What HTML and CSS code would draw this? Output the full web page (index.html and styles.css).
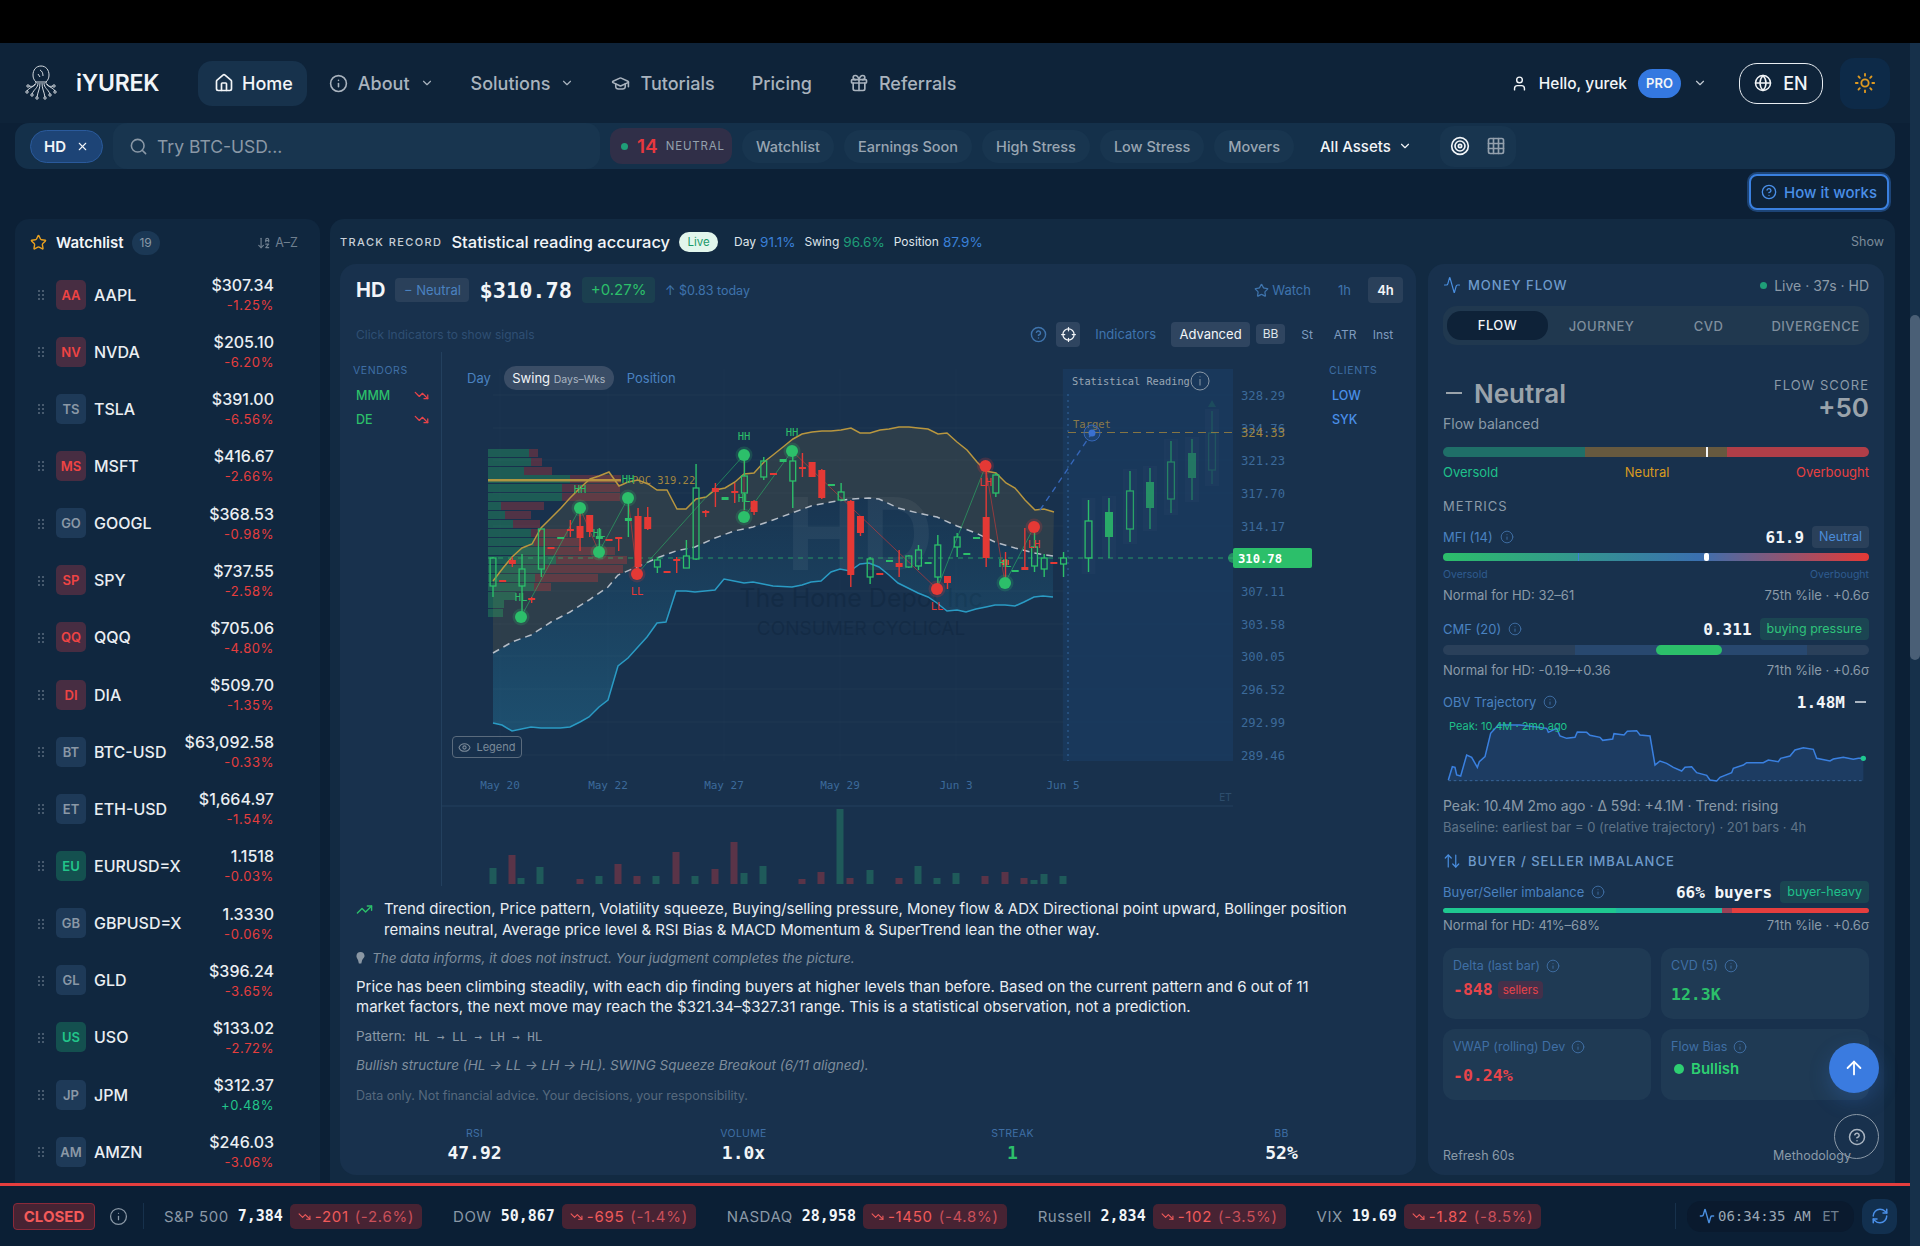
FILE: index.html
```html
<!DOCTYPE html>
<html lang="en">
<head>
    <meta charset="UTF-8">
    <title>iYUREK</title>
    <link rel="stylesheet" href="styles.css">
</head>
<body>
    <svg class="sprite" xmlns="http://www.w3.org/2000/svg">
        <symbol id="i-home" viewBox="0 0 24 24"><path d="M15 21v-8a1 1 0 0 0-1-1h-4a1 1 0 0 0-1 1v8"/><path d="M3 10a2 2 0 0 1 .709-1.528l7-5.999a2 2 0 0 1 2.582 0l7 5.999A2 2 0 0 1 21 10v9a2 2 0 0 1-2 2H5a2 2 0 0 1-2-2z"/></symbol>
        <symbol id="i-info" viewBox="0 0 24 24"><circle cx="12" cy="12" r="10"/><path d="M12 16v-4"/><path d="M12 8h.01"/></symbol>
        <symbol id="i-chev" viewBox="0 0 24 24"><path d="m6 9 6 6 6-6"/></symbol>
        <symbol id="i-cap" viewBox="0 0 24 24"><path d="M21.42 10.922a1 1 0 0 0-.019-1.838L12.83 5.18a2 2 0 0 0-1.66 0L2.6 9.08a1 1 0 0 0 0 1.832l8.57 3.908a2 2 0 0 0 1.66 0z"/><path d="M22 10v6"/><path d="M6 12.5V16a6 3 0 0 0 12 0v-3.5"/></symbol>
        <symbol id="i-gift" viewBox="0 0 24 24"><rect x="3" y="8" width="18" height="4" rx="1"/><path d="M12 8v13"/><path d="M19 12v7a2 2 0 0 1-2 2H7a2 2 0 0 1-2-2v-7"/><path d="M7.5 8a2.5 2.5 0 0 1 0-5A4.8 8 0 0 1 12 8a4.8 8 0 0 1 4.5-5 2.5 2.5 0 0 1 0 5"/></symbol>
        <symbol id="i-user" viewBox="0 0 24 24"><path d="M19 21v-2a4 4 0 0 0-4-4H9a4 4 0 0 0-4 4v2"/><circle cx="12" cy="7" r="4"/></symbol>
        <symbol id="i-globe" viewBox="0 0 24 24"><circle cx="12" cy="12" r="10"/><path d="M12 2a14.5 14.5 0 0 0 0 20 14.5 14.5 0 0 0 0-20"/><path d="M2 12h20"/></symbol>
        <symbol id="i-sun" viewBox="0 0 24 24"><circle cx="12" cy="12" r="4"/><path d="M12 2v2M12 20v2M4.93 4.93l1.41 1.41M17.66 17.66l1.41 1.41M2 12h2M20 12h2M6.34 17.66l-1.41 1.41M19.07 4.93l-1.41 1.41"/></symbol>
        <symbol id="i-search" viewBox="0 0 24 24"><path d="m21 21-4.34-4.34"/><circle cx="11" cy="11" r="8"/></symbol>
        <symbol id="i-x" viewBox="0 0 24 24"><path d="M18 6 6 18"/><path d="m6 6 12 12"/></symbol>
        <symbol id="i-target" viewBox="0 0 24 24"><circle cx="12" cy="12" r="10"/><circle cx="12" cy="12" r="6"/><circle cx="12" cy="12" r="2"/></symbol>
        <symbol id="i-grid" viewBox="0 0 24 24"><rect x="3" y="3" width="18" height="18" rx="2"/><path d="M3 9h18M3 15h18M9 3v18M15 3v18"/></symbol>
        <symbol id="i-help" viewBox="0 0 24 24"><circle cx="12" cy="12" r="10"/><path d="M9.09 9a3 3 0 0 1 5.83 1c0 2-3 3-3 3"/><path d="M12 17h.01"/></symbol>
        <symbol id="i-star" viewBox="0 0 24 24"><path d="M11.525 2.295a.53.53 0 0 1 .95 0l2.31 4.679a2.123 2.123 0 0 0 1.595 1.16l5.166.756a.53.53 0 0 1 .294.904l-3.736 3.638a2.123 2.123 0 0 0-.611 1.878l.882 5.14a.53.53 0 0 1-.771.56l-4.618-2.428a2.122 2.122 0 0 0-1.973 0L6.396 21.01a.53.53 0 0 1-.77-.56l.881-5.139a2.122 2.122 0 0 0-.611-1.879L2.16 9.795a.53.53 0 0 1 .294-.906l5.165-.755a2.122 2.122 0 0 0 1.597-1.16z"/></symbol>
        <symbol id="i-pulse" viewBox="0 0 24 24"><path d="M22 12h-2.48a2 2 0 0 0-1.93 1.46l-2.35 8.36a.25.25 0 0 1-.48 0L9.24 2.18a.25.25 0 0 0-.48 0l-2.35 8.36A2 2 0 0 1 4.49 12H2"/></symbol>
        <symbol id="i-updown" viewBox="0 0 24 24"><path d="m21 16-4 4-4-4"/><path d="M17 20V4"/><path d="m3 8 4-4 4 4"/><path d="M7 4v16"/></symbol>
        <symbol id="i-up" viewBox="0 0 24 24"><path d="m5 12 7-7 7 7"/><path d="M12 19V5"/></symbol>
        <symbol id="i-sort" viewBox="0 0 24 24"><path d="m3 16 4 4 4-4"/><path d="M7 20V4"/><path d="M20 8h-5"/><path d="M15 10V6.5a2.5 2.5 0 0 1 5 0V10"/><path d="M15 14h5l-5 6h5"/></symbol>
        <symbol id="i-rise" viewBox="0 0 24 24"><path d="M16 7h6v6"/><path d="m22 7-8.5 8.5-5-5L2 17"/></symbol>
        <symbol id="i-fall" viewBox="0 0 24 24"><path d="M16 17h6v-6"/><path d="m22 17-8.5-8.5-5 5L2 7"/></symbol>
        <symbol id="i-refresh" viewBox="0 0 24 24"><path d="M3 12a9 9 0 0 1 9-9 9.75 9.75 0 0 1 6.74 2.74L21 8"/><path d="M21 3v5h-5"/><path d="M21 12a9 9 0 0 1-9 9 9.75 9.75 0 0 1-6.74-2.74L3 16"/><path d="M8 16H3v5"/></symbol>
        <symbol id="i-eye" viewBox="0 0 24 24"><path d="M2.062 12.348a1 1 0 0 1 0-.696 10.75 10.75 0 0 1 19.876 0 1 1 0 0 1 0 .696 10.75 10.75 0 0 1-19.876 0"/><circle cx="12" cy="12" r="3"/></symbol>
        <symbol id="i-cross" viewBox="0 0 24 24"><circle cx="12" cy="12" r="9"/><path d="M12 1v5M12 18v5M1 12h5M18 12h5"/></symbol>
    </svg>

    <div class="topbar"></div>

    <div class="shell">
        <div class="page">

            <header class="nav">
                <svg class="logo" viewBox="0 0 34 36">
                    <path d="M17 1c-5 0-8 4-8 9 0 3 1 5 3 7h10c2-2 3-4 3-7 0-5-3-9-8-9z"/>
                    <path d="M16 5c2 1 3 3 3 6M14 9l2 3"/>
                    <path d="M12 17c0 4-4 5-7 4M11 19c-2 4-6 3-8 7M14 18c0 5-4 6-6 11M16 18c0 6-2 8-3 14M18 18c0 6 2 8 3 14M20 18c0 5 4 6 6 11M23 19c2 4 6 3 8 7M22 17c0 4 4 5 7 4"/>
                    <circle cx="4" cy="21" r="1.2"/><circle cx="30" cy="21" r="1.2"/><circle cx="3" cy="27" r="1.2"/><circle cx="31" cy="27" r="1.2"/><circle cx="8" cy="30" r="1.2"/><circle cx="26" cy="30" r="1.2"/><circle cx="13" cy="33" r="1.2"/><circle cx="21" cy="33" r="1.2"/>
                </svg>
                <span class="brand">iYUREK</span>
                <a class="nav-item active"><svg class="ic ic-20"><use href="#i-home"/></svg>Home</a>
                <a class="nav-item nav-about"><svg class="ic ic-19"><use href="#i-info"/></svg>About<svg class="ic ic-14"><use href="#i-chev"/></svg></a>
                <a class="nav-item nav-wide">Solutions<svg class="ic ic-14"><use href="#i-chev"/></svg></a>
                <a class="nav-item nav-wide"><svg class="ic ic-19"><use href="#i-cap"/></svg>Tutorials</a>
                <a class="nav-item nav-wide">Pricing</a>
                <a class="nav-item nav-wide"><svg class="ic ic-20"><use href="#i-gift"/></svg>Referrals</a>
                <div class="nav-right">
                    <svg class="ic ic-17 white"><use href="#i-user"/></svg>
                    <span class="hello">Hello, yurek</span>
                    <span class="pro">PRO</span>
                    <svg class="ic ic-14 chev-user"><use href="#i-chev"/></svg>
                    <button class="lang"><svg class="ic ic-18"><use href="#i-globe"/></svg>EN</button>
                    <div class="theme"><svg class="ic ic-22"><use href="#i-sun"/></svg></div>
                </div>
            </header>

            <div class="searchbar">
                <span class="hd-chip">HD<svg class="ic ic-13"><use href="#i-x"/></svg></span>
                <div class="search"><svg class="ic ic-19"><use href="#i-search"/></svg>Try BTC-USD...</div>
                <span class="stress"><i class="dot"></i><b>14</b><em>NEUTRAL</em></span>
                <span class="pill">Watchlist</span>
                <span class="pill">Earnings Soon</span>
                <span class="pill">High Stress</span>
                <span class="pill">Low Stress</span>
                <span class="pill">Movers</span>
                <span class="assets">All Assets<svg class="ic ic-14"><use href="#i-chev"/></svg></span>
                <div class="view-toggle">
                    <svg class="ic ic-20 white"><use href="#i-target"/></svg>
                    <svg class="ic ic-20"><use href="#i-grid"/></svg>
                </div>
            </div>

            <div class="how-row">
                <button class="how"><svg class="ic ic-16"><use href="#i-help"/></svg>How it works</button>
            </div>

            <div class="content">

                <aside class="watchlist">
                    <div class="wl-head">
                        <svg class="ic ic-17 gold"><use href="#i-star"/></svg>
                        <strong>Watchlist</strong>
                        <span class="count">19</span>
                        <span class="sort"><svg class="ic ic-14"><use href="#i-sort"/></svg>A–Z</span>
                    </div>
                    <div class="wl-row"><i class="grip"></i><span class="badge bad">AA</span><span class="sym">AAPL</span><span class="quote"><b>$307.34</b><em>-1.25%</em></span></div>
                    <div class="wl-row"><i class="grip"></i><span class="badge bad">NV</span><span class="sym">NVDA</span><span class="quote"><b>$205.10</b><em>-6.20%</em></span></div>
                    <div class="wl-row"><i class="grip"></i><span class="badge">TS</span><span class="sym">TSLA</span><span class="quote"><b>$391.00</b><em>-6.56%</em></span></div>
                    <div class="wl-row"><i class="grip"></i><span class="badge bad">MS</span><span class="sym">MSFT</span><span class="quote"><b>$416.67</b><em>-2.66%</em></span></div>
                    <div class="wl-row"><i class="grip"></i><span class="badge">GO</span><span class="sym">GOOGL</span><span class="quote"><b>$368.53</b><em>-0.98%</em></span></div>
                    <div class="wl-row"><i class="grip"></i><span class="badge bad">SP</span><span class="sym">SPY</span><span class="quote"><b>$737.55</b><em>-2.58%</em></span></div>
                    <div class="wl-row"><i class="grip"></i><span class="badge bad">QQ</span><span class="sym">QQQ</span><span class="quote"><b>$705.06</b><em>-4.80%</em></span></div>
                    <div class="wl-row"><i class="grip"></i><span class="badge bad">DI</span><span class="sym">DIA</span><span class="quote"><b>$509.70</b><em>-1.35%</em></span></div>
                    <div class="wl-row"><i class="grip"></i><span class="badge">BT</span><span class="sym">BTC-USD</span><span class="quote"><b>$63,092.58</b><em>-0.33%</em></span></div>
                    <div class="wl-row"><i class="grip"></i><span class="badge">ET</span><span class="sym">ETH-USD</span><span class="quote"><b>$1,664.97</b><em>-1.54%</em></span></div>
                    <div class="wl-row"><i class="grip"></i><span class="badge good">EU</span><span class="sym">EURUSD=X</span><span class="quote"><b>1.1518</b><em>-0.03%</em></span></div>
                    <div class="wl-row"><i class="grip"></i><span class="badge">GB</span><span class="sym">GBPUSD=X</span><span class="quote"><b>1.3330</b><em>-0.06%</em></span></div>
                    <div class="wl-row"><i class="grip"></i><span class="badge">GL</span><span class="sym">GLD</span><span class="quote"><b>$396.24</b><em>-3.65%</em></span></div>
                    <div class="wl-row"><i class="grip"></i><span class="badge good">US</span><span class="sym">USO</span><span class="quote"><b>$133.02</b><em>-2.72%</em></span></div>
                    <div class="wl-row"><i class="grip"></i><span class="badge">JP</span><span class="sym">JPM</span><span class="quote"><b>$312.37</b><em class="up">+0.48%</em></span></div>
                    <div class="wl-row"><i class="grip"></i><span class="badge">AM</span><span class="sym">AMZN</span><span class="quote"><b>$246.03</b><em>-3.06%</em></span></div>
                </aside>

                <main class="main">
                    <div class="track">
                        <span class="track-tag">TRACK RECORD</span>
                        <span class="track-title">Statistical reading accuracy</span>
                        <span class="live">Live</span>
                        <span class="acc">Day <b class="blue">91.1%</b></span>
                        <span class="acc">Swing <b class="teal">96.6%</b></span>
                        <span class="acc">Position <b class="blue">87.9%</b></span>
                        <span class="show">Show</span>
                    </div>

                    <div class="columns">
                        <section class="chart-card">
                            <div class="quote-row">
                                <span class="ticker">HD</span>
                                <span class="state">− Neutral</span>
                                <span class="last">$310.78</span>
                                <span class="delta">+0.27%</span>
                                <span class="today">↑ $0.83 today</span>
                                <span class="watch"><svg class="ic ic-15"><use href="#i-star"/></svg>Watch</span>
                                <span class="tf">1h</span>
                                <span class="tf on">4h</span>
                            </div>
                            <div class="tool-row">
                                <span class="hint">Click Indicators to show signals</span>
                                <svg class="ic ic-17 tool-help"><use href="#i-help"/></svg>
                                <span class="tool-box"><svg class="ic ic-15 white"><use href="#i-cross"/></svg></span>
                                <span class="tool-link">Indicators</span>
                                <span class="tool-on">Advanced</span>
                                <span class="tool-small on">BB</span>
                                <span class="tool-small">St</span>
                                <span class="tool-small">ATR</span>
                                <span class="tool-small">Inst</span>
                            </div>

                            <div class="chart-body">
                                <div class="side vendors">
                                    <h5>VENDORS</h5>
                                    <p><span>MMM</span><svg class="ic ic-15 red"><use href="#i-fall"/></svg></p>
                                    <p><span>DE</span><svg class="ic ic-15 red"><use href="#i-fall"/></svg></p>
                                </div>
                                <div class="plot">
                                    <svg id="chart" class="chart" viewBox="442 352 875 534"></svg>
                                    <div class="horizon">
                                        <span>Day</span>
                                        <span class="on">Swing <small>Days–Wks</small></span>
                                        <span>Position</span>
                                    </div>
                                    <div class="legend-btn"><svg class="ic ic-13"><use href="#i-eye"/></svg>Legend</div>
                                </div>
                                <div class="side clients">
                                    <h5>CLIENTS</h5>
                                    <p>LOW</p>
                                    <p>SYK</p>
                                </div>
                            </div>

                            <div class="reading">
                                <p class="lead"><svg class="ic ic-17 green"><use href="#i-rise"/></svg><span>Trend direction, Price pattern, Volatility squeeze, Buying/selling pressure, Money flow &amp; ADX Directional point upward, Bollinger position remains neutral, Average price level &amp; RSI Bias &amp; MACD Momentum &amp; SuperTrend lean the other way.</span></p>
                                <p class="note"><svg class="bulb" viewBox="0 0 10 16"><path d="M5 0C2 0 0 2 0 5c0 2 1 3 2 5l1 4h3l1-4c1-2 3-3 3-5 0-3-2-5-5-5z"/></svg>The data informs, it does not instruct. Your judgment completes the picture.</p>
                                <p class="body-text">Price has been climbing steadily, with each dip finding buyers at higher levels than before. Based on the current pattern and 6 out of 11 market factors, the next move may reach the $321.34–$327.31 range. This is a statistical observation, not a prediction.</p>
                                <p class="pattern">Pattern: <code>HL → LL → LH → HL</code></p>
                                <p class="note plain">Bullish structure (HL → LL → LH → HL). SWING Squeeze Breakout (6/11 aligned).</p>
                                <p class="legal">Data only. Not financial advice. Your decisions, your responsibility.</p>
                            </div>

                            <div class="stats">
                                <div><label>RSI</label><b>47.92</b></div>
                                <div><label>VOLUME</label><b>1.0x</b></div>
                                <div><label>STREAK</label><b class="green">1</b></div>
                                <div><label>BB</label><b>52%</b></div>
                            </div>
                        </section>

                        <section class="flow-card">
                            <div class="flow-head">
                                <span class="sec-title"><svg class="ic ic-18"><use href="#i-pulse"/></svg>MONEY FLOW</span>
                                <span class="flow-live"><i class="dot"></i>Live · 37s · HD</span>
                            </div>
                            <div class="flow-tabs">
                                <span class="on">FLOW</span><span>JOURNEY</span><span>CVD</span><span>DIVERGENCE</span>
                            </div>

                            <div class="flow-sum">
                                <div>
                                    <div class="verdict"><i></i>Neutral</div>
                                    <div class="verdict-sub">Flow balanced</div>
                                </div>
                                <div class="score"><label>FLOW SCORE</label><b>+50</b></div>
                            </div>
                            <div class="zone-bar"><i class="zone-a"></i><i class="zone-b"></i><i class="zone-c"></i><u></u></div>
                            <div class="zone-labels"><span class="z-green">Oversold</span><span class="z-gold">Neutral</span><span class="z-red">Overbought</span></div>

                            <h6 class="metrics">METRICS</h6>

                            <div class="metric-row">
                                <span class="m-name">MFI (14)<svg class="ic ic-14"><use href="#i-info"/></svg></span>
                                <span class="m-val">61.9</span>
                                <span class="tag tag-blue">Neutral</span>
                            </div>
                            <div class="mfi-bar"><i class="tick"></i><u></u></div>
                            <div class="scale"><span>Oversold</span><span>Overbought</span></div>
                            <div class="normal"><span>Normal for HD: 32–61</span><span>75th %ile · +0.6σ</span></div>

                            <div class="metric-row cmf">
                                <span class="m-name">CMF (20)<svg class="ic ic-14"><use href="#i-info"/></svg></span>
                                <span class="m-val green">0.311</span>
                                <span class="tag tag-green">buying pressure</span>
                            </div>
                            <div class="cmf-bar"><i class="range"></i><i class="fill"></i></div>
                            <div class="normal n-cmf"><span>Normal for HD: -0.19–+0.36</span><span>71th %ile · +0.6σ</span></div>

                            <div class="metric-row obv">
                                <span class="m-name">OBV Trajectory<svg class="ic ic-14"><use href="#i-info"/></svg></span>
                                <span class="m-val">1.48M</span>
                                <i class="obv-dash"></i>
                            </div>
                            <svg id="obv" class="obv-chart" viewBox="69 168 1278 204"></svg>
                            <p class="obv-text">Peak: 10.4M 2mo ago · Δ 59d: +4.1M · Trend: rising</p>
                            <p class="obv-base">Baseline: earliest bar = 0 (relative trajectory) · 201 bars · 4h</p>

                            <div class="sec-title buyers"><svg class="ic ic-18"><use href="#i-updown"/></svg>BUYER / SELLER IMBALANCE</div>
                            <div class="metric-row bs">
                                <span class="m-name">Buyer/Seller imbalance<svg class="ic ic-14"><use href="#i-info"/></svg></span>
                                <span class="m-val">66% buyers</span>
                                <span class="tag tag-teal">buyer-heavy</span>
                            </div>
                            <div class="bs-bar"><i class="b1"></i><i class="b2"></i><i class="b3"></i><i class="b4"></i></div>
                            <div class="normal n-bs"><span>Normal for HD: 41%–68%</span><span>71th %ile · +0.6σ</span></div>

                            <div class="tiles">
                                <div class="tile">
                                    <label>Delta (last bar)<svg class="ic ic-14"><use href="#i-info"/></svg></label>
                                    <div class="tile-val"><b class="red">-848</b><span class="tag tag-red">sellers</span></div>
                                </div>
                                <div class="tile">
                                    <label>CVD (5)<svg class="ic ic-14"><use href="#i-info"/></svg></label>
                                    <div class="tile-val low"><b class="green">12.3K</b></div>
                                </div>
                                <div class="tile">
                                    <label>VWAP (rolling) Dev<svg class="ic ic-14"><use href="#i-info"/></svg></label>
                                    <div class="tile-val low"><b class="red">-0.24%</b></div>
                                </div>
                                <div class="tile">
                                    <label>Flow Bias<svg class="ic ic-14"><use href="#i-info"/></svg></label>
                                    <div class="bias"><i></i>Bullish</div>
                                </div>
                            </div>

                            <div class="flow-foot"><span>Refresh 60s</span><span>Methodology</span></div>
                        </section>
                    </div>
                </main>
            </div>

            <footer class="ticker-bar">
                <span class="closed">CLOSED</span>
                <svg class="ic ic-19 info-foot"><use href="#i-info"/></svg>
                <i class="foot-sep"></i>
                <div class="tick-item"><span>S&amp;P 500</span><b>7,384</b><em><svg class="ic ic-13"><use href="#i-fall"/></svg>-201<small>(-2.6%)</small></em></div>
                <div class="tick-item"><span>DOW</span><b>50,867</b><em><svg class="ic ic-13"><use href="#i-fall"/></svg>-695<small>(-1.4%)</small></em></div>
                <div class="tick-item"><span>NASDAQ</span><b>28,958</b><em><svg class="ic ic-13"><use href="#i-fall"/></svg>-1450<small>(-4.8%)</small></em></div>
                <div class="tick-item"><span>Russell</span><b>2,834</b><em><svg class="ic ic-13"><use href="#i-fall"/></svg>-102<small>(-3.5%)</small></em></div>
                <div class="tick-item"><span>VIX</span><b>19.69</b><em><svg class="ic ic-13"><use href="#i-fall"/></svg>-1.82<small>(-8.5%)</small></em></div>
                <i class="foot-sep right"></i>
                <div class="clock"><svg class="ic ic-16"><use href="#i-pulse"/></svg>06:34:35 AM <span>ET</span></div>
                <div class="sync"><svg class="ic ic-18"><use href="#i-refresh"/></svg></div>
            </footer>

            <button class="fab"><svg class="ic ic-22"><use href="#i-up"/></svg></button>
            <button class="fab-help"><svg class="ic ic-18"><use href="#i-help"/></svg></button>
        </div>

        <div class="scrollbar"><i></i></div>
    </div>

    <script src="chart.js"></script>
</body>
</html>
```

FILE: styles.css
```css
*{
    margin: 0;
    padding: 0;
    box-sizing: border-box;
}
html,body{
    height: 100%;
    overflow: hidden;
}
body{
    background: #0c2036;
    color: #e8edf2;
    font-family: Inter, "Liberation Sans", sans-serif;
}
button{
    font-family: inherit;
    background: none;
    border: none;
}
em{
    font-style: normal;
}
.sprite{
    display: none;
}
.ic{
    fill: none;
    stroke: currentColor;
    stroke-width: 2;
    stroke-linecap: round;
    stroke-linejoin: round;
    flex: none;
}
.ic-13{ width: 13px; height: 13px; }
.ic-14{ width: 14px; height: 14px; }
.ic-15{ width: 15px; height: 15px; }
.ic-16{ width: 16px; height: 16px; }
.ic-17{ width: 17px; height: 17px; }
.ic-18{ width: 18px; height: 18px; }
.ic-19{ width: 19px; height: 19px; }
.ic-20{ width: 20px; height: 20px; }
.ic-22{ width: 22px; height: 22px; }
.white{ color: #f2f5f8; }
.gold{ color: #e8a020; }
.green{ color: #2cbf6a; }
.red{ color: #e8444a; }
.blue{ color: #3a80d8; }
.teal{ color: #1f9e78; }

.topbar{
    height: 43px;
    background: #000;
}
.shell{
    display: flex;
    height: 1203px;
}
.page{
    position: relative;
    width: 1910px;
    display: flex;
    flex-direction: column;
}
.scrollbar{
    width: 10px;
    background: #16304a;
    padding-top: 272px;
}
.scrollbar i{
    display: block;
    height: 345px;
    background: #4a5f76;
    border-radius: 5px;
}

/* nav */
.nav{
    height: 80px;
    display: flex;
    align-items: center;
    padding: 0 20px 0 24px;
    background: #0e2339;
    flex: none;
}
.logo{
    width: 34px;
    height: 36px;
    fill: none;
    stroke: #d4dae0;
    stroke-width: 1;
}
.brand{
    margin: 0 41px 0 18px;
    font-size: 23px;
    font-weight: 600;
    letter-spacing: -0.2px;
    color: #f2f5f8;
    width: 81px;
}
.nav-item{
    display: flex;
    align-items: center;
    gap: 10px;
    font-size: 18px;
    font-weight: 500;
    color: #a9b3be;
}
.nav-item.active{
    height: 45px;
    padding: 0 14px 0 16px;
    gap: 8px;
    background: #17324c;
    border-radius: 14px;
    color: #f2f5f8;
}
.nav-about{
    margin-left: 22px;
}
.nav-wide{
    margin-left: 37px;
}
.nav-right{
    margin-left: auto;
    display: flex;
    align-items: center;
}
.hello{
    margin-left: 11px;
    font-size: 15.5px;
    font-weight: 500;
    color: #f2f5f8;
}
.pro{
    margin-left: 11px;
    width: 43px;
    height: 29px;
    line-height: 29px;
    text-align: center;
    background: #3478e0;
    border-radius: 15px;
    font-size: 13px;
    font-weight: 600;
    color: #f2f5f8;
}
.chev-user{
    margin-left: 12px;
    color: #c2cad2;
}
.lang{
    margin-left: 32px;
    width: 84px;
    height: 41px;
    display: flex;
    align-items: center;
    justify-content: center;
    gap: 11px;
    border: 1.5px solid #e8edf2;
    border-radius: 18px;
    color: #f2f5f8;
    font-size: 18px;
    font-weight: 500;
}
.theme{
    margin-left: 17px;
    width: 50px;
    height: 51px;
    display: flex;
    align-items: center;
    justify-content: center;
    background: #0d2a48;
    border-radius: 14px;
    color: #e09a20;
}

/* search row */
.searchbar{
    height: 46px;
    margin: 0 15px;
    flex: none;
    display: flex;
    align-items: center;
    background: #14304a;
    border-radius: 14px;
    padding-left: 15px;
    font-size: 15px;
}
.hd-chip{
    width: 73px;
    height: 33px;
    display: flex;
    align-items: center;
    justify-content: center;
    gap: 10px;
    background: #1d4476;
    border: 1px solid #2a5a9c;
    border-radius: 17px;
    font-size: 15px;
    font-weight: 600;
    color: #f2f5f8;
}
.search{
    margin-left: 10px;
    width: 487px;
    height: 46px;
    display: flex;
    align-items: center;
    gap: 9px;
    padding-left: 16px;
    background: #18354f;
    border-radius: 14px;
    font-size: 17.5px;
    color: #8a98a6;
}
.stress{
    margin-left: 10px;
    width: 122px;
    height: 36px;
    display: flex;
    align-items: center;
    padding-left: 11px;
    background: #302f48;
    border-radius: 12px;
}
.dot{
    display: inline-block;
    width: 7px;
    height: 7px;
    background: #1f9e78;
    border-radius: 50%;
}
.stress b{
    margin-left: 9px;
    font-size: 19px;
    font-weight: 600;
    color: #e8383e;
}
.stress em{
    margin-left: 8px;
    font-size: 11.5px;
    letter-spacing: 0.8px;
    color: #93a0ad;
}
.pill{
    margin-left: 10px;
    height: 33px;
    line-height: 33px;
    padding: 0 14px;
    background: #18354f;
    border-radius: 17px;
    font-weight: 500;
    font-size: 14.5px;
    color: #98a5b2;
}
.assets{
    margin-left: 26px;
    display: flex;
    align-items: center;
    gap: 7px;
    font-size: 15px;
    font-weight: 500;
    color: #f2f5f8;
}
.view-toggle{
    margin-left: 28px;
    width: 76px;
    height: 41px;
    display: flex;
    align-items: center;
    justify-content: center;
    gap: 16px;
    background: #18354f;
    border-radius: 14px;
    color: #93a0ad;
}

.how-row{
    height: 50px;
    flex: none;
    display: flex;
    justify-content: flex-end;
    align-items: flex-start;
    padding: 5px 21px 0 0;
}
.how{
    width: 140px;
    height: 36px;
    display: flex;
    align-items: center;
    justify-content: center;
    gap: 7px;
    background: #0e2339;
    border: 2px solid #3a80e0;
    box-shadow: 0 0 0 2px #1d4476;
    border-radius: 8px;
    color: #4a8fe8;
    font-size: 15px;
    font-weight: 500;
}

/* columns */
.content{
    flex: 1;
    min-height: 0;
    display: flex;
    gap: 10px;
    padding: 0 15px;
    overflow: hidden;
}

/* watchlist */
.watchlist{
    width: 305px;
    flex: none;
    background: #10273f;
    border-radius: 14px 14px 0 0;
    overflow: hidden;
}
.wl-head{
    height: 47px;
    display: flex;
    align-items: center;
    padding: 0 22px 0 15px;
}
.wl-head strong{
    margin-left: 9px;
    font-size: 15px;
    font-weight: 600;
    color: #f2f5f8;
}
.count{
    margin-left: 8px;
    width: 28px;
    height: 24px;
    line-height: 24px;
    text-align: center;
    background: #1b3855;
    border-radius: 12px;
    font-size: 12px;
    color: #8a98a6;
}
.sort{
    margin-left: auto;
    display: flex;
    align-items: center;
    gap: 4px;
    font-size: 12.5px;
    color: #6f7f8f;
}
.wl-row{
    height: 57.15px;
    display: flex;
    align-items: center;
    padding-left: 22px;
}
.grip{
    width: 8px;
    height: 11px;
    background-image: radial-gradient(circle, #475a6e 1px, transparent 1.2px);
    background-size: 4px 4px;
}
.badge{
    margin-left: 11px;
    width: 30px;
    height: 30px;
    line-height: 30px;
    text-align: center;
    background: #1e3a58;
    border-radius: 5px;
    font-size: 13px;
    font-weight: 600;
    color: #8a98a6;
}
.badge.bad{
    background: #472d42;
    color: #ef4444;
}
.badge.good{
    background: #14504f;
    color: #22c58a;
}
.sym{
    margin-left: 8px;
    font-size: 16px;
    font-weight: 500;
    color: #eaeef2;
}
.quote{
    margin-left: auto;
    margin-right: 46px;
    display: flex;
    flex-direction: column;
    align-items: flex-end;
}
.quote b{
    font-size: 16px;
    font-weight: 500;
    line-height: 20px;
    color: #eaeef2;
}
.quote em{
    margin-top: 1px;
    font-size: 13px;
    line-height: 18px;
    letter-spacing: 0.6px;
    color: #e53e3e;
}
.quote em.up{
    color: #22c58a;
}

/* main panel */
.main{
    flex: 1;
    min-width: 0;
    background: #122a42;
    border-radius: 14px 14px 0 0;
    padding: 0 11px 8px 10px;
    display: flex;
    flex-direction: column;
}
.track{
    height: 45px;
    flex: none;
    display: flex;
    align-items: center;
}
.track-tag{
    font-size: 11px;
    letter-spacing: 1.4px;
    color: #c8d0d8;
    font-weight: 500;
}
.track-title{
    margin-left: 9px;
    font-size: 16.5px;
    font-weight: 500;
    color: #f2f5f8;
}
.live{
    margin-left: 9px;
    width: 39px;
    height: 20px;
    line-height: 20px;
    text-align: center;
    background: #e2f6ec;
    border-radius: 10px;
    font-size: 11.5px;
    color: #1a9a6a;
}
.acc{
    margin-left: 9px;
    font-size: 12px;
    color: #dfe5eb;
    display: flex;
    align-items: center;
    gap: 4px;
}
.acc:first-of-type{
    margin-left: 16px;
}
.live + .acc{
    margin-left: 16px;
}
.acc b{
    font-size: 13.5px;
    font-weight: 400;
}
.show{
    margin-left: auto;
    font-size: 12.5px;
    color: #7b8a99;
}
.columns{
    flex: 1;
    min-height: 0;
    display: flex;
    gap: 12px;
}

/* chart card */
.chart-card{
    width: 1076px;
    flex: none;
    background: #18314d;
    border-radius: 16px;
    position: relative;
    overflow: hidden;
}
.quote-row{
    height: 52px;
    display: flex;
    align-items: center;
    padding: 0 13px 0 16px;
}
.ticker{
    font-size: 20px;
    font-weight: 700;
    color: #f2f5f8;
}
.state{
    margin-left: 10px;
    width: 74px;
    height: 24px;
    line-height: 24px;
    text-align: center;
    background: #2a405a;
    border-radius: 4px;
    font-size: 13px;
    color: #4a82c0;
}
.last{
    margin-left: 10px;
    font-family: "DejaVu Sans Mono", monospace;
    font-size: 22px;
    font-weight: 700;
    color: #f2f5f8;
}
.delta{
    margin-left: 10px;
    width: 73px;
    height: 26px;
    line-height: 26px;
    text-align: center;
    background: #1b3f4f;
    border-radius: 4px;
    font-size: 15px;
    color: #2cbf6a;
}
.today{
    margin-left: 10px;
    font-size: 12.5px;
    color: #3f74ad;
}
.watch{
    margin-left: auto;
    display: flex;
    align-items: center;
    gap: 3px;
    font-size: 13px;
    color: #3f74ad;
}
.tf{
    width: 35px;
    height: 26px;
    line-height: 26px;
    text-align: center;
    font-size: 13px;
    color: #3f74ad;
    border-radius: 4px;
}
.tf:nth-last-child(2){
    margin-left: 16px;
}
.tf.on{
    margin-left: 6px;
    background: #2a405a;
    color: #f2f5f8;
    font-weight: 600;
}
.tool-row{
    height: 36px;
    display: flex;
    align-items: center;
    padding: 0 14px 0 16px;
    font-size: 13px;
}
.hint{
    font-size: 12px;
    color: #2f4f73;
}
.tool-help{
    margin-left: auto;
    color: #3f74ad;
}
.tool-box{
    margin-left: 9px;
    width: 24px;
    height: 25px;
    display: flex;
    align-items: center;
    justify-content: center;
    background: #2f4560;
    border-radius: 4px;
}
.tool-link{
    margin-left: 15px;
    color: #3f74ad;
}
.tool-on{
    margin-left: 15px;
    width: 79px;
    height: 25px;
    line-height: 25px;
    text-align: center;
    background: #2f4560;
    border-radius: 4px;
    color: #f2f5f8;
}
.tool-small{
    width: 38px;
    text-align: center;
    font-size: 12px;
    color: #7f9cbf;
}
.tool-small.on{
    margin-left: 6px;
    width: 29px;
    height: 20px;
    line-height: 20px;
    background: #2f4560;
    border-radius: 4px;
    color: #dfe5eb;
    margin-right: 3px;
}
.chart-body{
    height: 534px;
    display: flex;
}
.side{
    width: 102px;
    flex: none;
    padding: 12px 0 0 13px;
    border-right: 1px solid #23405e;
}
.side h5{
    font-size: 10.5px;
    font-weight: 400;
    letter-spacing: 0.6px;
    line-height: 14px;
    color: #3f6fa5;
}
.side p{
    height: 24.5px;
    display: flex;
    align-items: center;
    justify-content: space-between;
    padding: 0 12px 0 3px;
    font-size: 12.5px;
    font-weight: 500;
    color: #2cbf6a;
}
.side h5 + p{
    margin-top: 5px;
}
.clients{
    width: 99px;
    padding-left: 12px;
    border-right: none;
}
.clients p{
    color: #4a8fe8;
}
.plot{
    position: relative;
    width: 875px;
    flex: none;
}
.chart{
    display: block;
    width: 875px;
    height: 534px;
}
.chart text{
    font-family: "DejaVu Sans Mono", monospace;
}
.horizon{
    position: absolute;
    left: 25px;
    top: 14px;
    display: flex;
    align-items: center;
    gap: 13px;
    font-size: 13px;
    color: #4a82c0;
}
.horizon .on{
    width: 110px;
    height: 24px;
    line-height: 24px;
    text-align: center;
    background: #3a4d66;
    border-radius: 12px;
    color: #f2f5f8;
}
.horizon small{
    font-size: 10.5px;
    color: #aab5c1;
}
.legend-btn{
    position: absolute;
    left: 10px;
    top: 384px;
    width: 70px;
    height: 22px;
    display: flex;
    align-items: center;
    justify-content: center;
    gap: 5px;
    border: 1px solid #5a6b7d;
    border-radius: 4px;
    font-size: 11px;
    color: #7b8a99;
}
.reading{
    padding: 13px 62px 0 16px;
    font-size: 15px;
    line-height: 20.5px;
    color: #e8edf2;
}
.lead{
    display: flex;
    gap: 11px;
}
.lead svg{
    margin-top: 2px;
}
.note{
    margin-top: 8px;
    font-size: 13.5px;
    font-style: italic;
    color: #7e8d9c;
    display: flex;
    align-items: center;
    gap: 7px;
}
.note.plain{
    margin-top: 8px;
}
.bulb{
    width: 9px;
    height: 13px;
    fill: #8a97a4;
}
.body-text{
    margin-top: 8px;
}
.pattern{
    margin-top: 8px;
    font-size: 13.5px;
    color: #8a98a6;
}
.pattern code{
    margin-left: 5px;
    font-family: "DejaVu Sans Mono", monospace;
    font-size: 12.5px;
}
.legal{
    margin-top: 10px;
    font-size: 12.5px;
    color: #56697d;
}
.stats{
    position: absolute;
    left: 0;
    right: 0;
    top: 863px;
    display: grid;
    grid-template-columns: repeat(4, 1fr);
    text-align: center;
}
.stats label{
    display: block;
    font-size: 10.5px;
    line-height: 14px;
    letter-spacing: 0.3px;
    color: #3f6fa5;
}
.stats b{
    display: block;
    font-family: "DejaVu Sans Mono", monospace;
    font-size: 18px;
    line-height: 24px;
    color: #f2f5f8;
}
.stats b.green{
    color: #2cbf6a;
}

/* money flow card */
.flow-card{
    flex: 1;
    min-width: 0;
    background: #18314d;
    border-radius: 16px;
    padding: 0 15px;
    overflow: hidden;
}
.flow-head{
    height: 42px;
    display: flex;
    align-items: center;
    justify-content: space-between;
}
.sec-title{
    display: flex;
    align-items: center;
    gap: 7px;
    font-size: 13px;
    font-weight: 500;
    letter-spacing: 1px;
    color: #6f9bcb;
}
.sec-title svg{
    stroke-width: 1.6;
    color: #4a8fe0;
}
.flow-live{
    display: flex;
    align-items: center;
    gap: 7px;
    font-size: 14px;
    color: #8c9aa8;
}
.flow-tabs{
    height: 39px;
    display: grid;
    grid-template-columns: 101px 1fr 1fr 1fr;
    align-items: center;
    padding: 0 0 0 4px;
    background: #20384f;
    border-radius: 14px;
    font-size: 13px;
    font-weight: 500;
    letter-spacing: 0.5px;
    text-align: center;
    color: #7f8e9d;
}
.flow-tabs .on{
    height: 29px;
    line-height: 29px;
    background: #0e2238;
    border-radius: 14px;
    color: #f2f5f8;
}
.flow-sum{
    margin-top: 33px;
    display: flex;
    justify-content: space-between;
}
.verdict{
    height: 30px;
    display: flex;
    align-items: center;
    gap: 12px;
    font-size: 26px;
    font-weight: 600;
    color: #9aa3ab;
}
.verdict i{
    margin-left: 3px;
    width: 16px;
    height: 2px;
    background: #9aa3ab;
}
.verdict-sub{
    margin-top: 7px;
    font-size: 14px;
    line-height: 18px;
    color: #8a9aa8;
}
.score{
    margin-top: -1px;
    text-align: right;
}
.score label{
    display: block;
    font-size: 13px;
    line-height: 16px;
    letter-spacing: 1px;
    color: #8a9aa8;
}
.score b{
    display: block;
    font-size: 26px;
    font-weight: 600;
    line-height: 30px;
    color: #9aa3ab;
}
.zone-bar{
    position: relative;
    margin-top: 14px;
    height: 10px;
    display: flex;
    border-radius: 5px;
    overflow: hidden;
}
.zone-bar i{
    flex: 1;
}
.zone-a{ background: #1f6f68; }
.zone-b{ background: #66593f; }
.zone-c{ background: #b03e48; }
.zone-bar u{
    position: absolute;
    left: 263px;
    width: 2px;
    height: 10px;
    background: #f2f5f8;
}
.zone-labels{
    margin-top: 7px;
    display: flex;
    justify-content: space-between;
    font-size: 13px;
    line-height: 16px;
}
.z-green{ color: #1fc08a; }
.z-gold{ color: #d99a20; }
.z-red{ color: #e84040; }
.metrics{
    margin-top: 18px;
    font-size: 13px;
    font-weight: 400;
    line-height: 16px;
    letter-spacing: 1px;
    color: #8a9aa8;
}
.metric-row{
    margin-top: 12px;
    height: 22px;
    display: flex;
    align-items: center;
    gap: 8px;
}
.m-name{
    margin-right: auto;
    display: flex;
    align-items: center;
    gap: 7px;
    font-size: 13px;
    color: #4a82c0;
}
.m-name svg{
    stroke-width: 1.6;
    color: #3f6fa5;
}
.m-val{
    font-family: "DejaVu Sans Mono", monospace;
    font-size: 16px;
    font-weight: 700;
    color: #f2f5f8;
}
.tag{
    height: 22px;
    line-height: 22px;
    padding: 0 7px;
    border-radius: 4px;
    font-size: 12.5px;
}
.tag-blue{ background: #2a405a; color: #4a8bd8; }
.tag-green{ background: #1b4552; color: #2fc27a; }
.tag-teal{ background: #1b4552; color: #1fc08a; }
.tag-red{ background: #44304a; color: #e8444a; height: 18px; line-height: 18px; font-size: 11.5px; padding: 0 5px; }
.mfi-bar{
    position: relative;
    margin-top: 5px;
    height: 8px;
    border-radius: 4px;
    background: linear-gradient(90deg, #2cbf6a, #3a70b0 60%, #e53935);
}
.mfi-bar .tick{
    position: absolute;
    left: 135px;
    width: 1px;
    height: 8px;
    background: #3a80d8;
}
.mfi-bar u{
    position: absolute;
    left: 261px;
    width: 5px;
    height: 8px;
    background: #fff;
    border-radius: 2px;
}
.scale{
    margin-top: 7px;
    display: flex;
    justify-content: space-between;
    font-size: 10.5px;
    line-height: 13px;
    color: #2f5c90;
}
.normal{
    margin-top: 6px;
    display: flex;
    justify-content: space-between;
    font-size: 13px;
    line-height: 16px;
    color: #8a9aa8;
}
.metric-row.cmf{
    margin-top: 15px;
}
.cmf-bar{
    position: relative;
    margin-top: 5px;
    height: 10px;
    border-radius: 5px;
    background: #2a405a;
    overflow: hidden;
}
.cmf-bar .range{
    position: absolute;
    left: 132px;
    width: 232px;
    height: 10px;
    background: #28486f;
}
.cmf-bar .fill{
    position: absolute;
    left: 213px;
    width: 66px;
    height: 10px;
    background: #2cbf6a;
    border-radius: 5px;
}
.n-cmf{
    margin-top: 7px;
}
.metric-row.obv{
    margin-top: 13px;
}
.obv-dash{
    margin: 0 3px 0 2px;
    width: 11px;
    height: 2px;
    background: #aab5c1;
}
.obv-chart{
    display: block;
    margin-top: 3px;
    width: 426px;
    height: 68px;
}
.obv-text{
    margin-top: 13px;
    font-size: 14px;
    line-height: 18px;
    color: #8a9aa8;
}
.obv-base{
    margin-top: 4px;
    font-size: 13px;
    line-height: 16px;
    color: #5f7488;
}
.sec-title.buyers{
    margin-top: 17px;
    height: 18px;
}
.metric-row.bs{
    margin-top: 11px;
}
.bs-bar{
    margin-top: 5px;
    height: 5px;
    display: flex;
    border-radius: 3px;
    overflow: hidden;
}
.b1{ width: 173px; background: #1fc890; }
.b2{ width: 106px; background: #20b8a0; }
.b3{ width: 10px; background: #9a4056; }
.b4{ flex: 1; background: #e53e3e; }
.n-bs{
    margin-top: 4px;
}
.tiles{
    margin-top: 15px;
    display: grid;
    grid-template-columns: 1fr 1fr;
    grid-auto-rows: 71px;
    gap: 10px;
}
.tile{
    padding: 10px;
    background: #1f3a54;
    border-radius: 12px;
}
.tile label{
    display: flex;
    align-items: center;
    gap: 6px;
    font-size: 12.5px;
    line-height: 16px;
    color: #3f6fa5;
}
.tile label svg{
    stroke-width: 1.6;
}
.tile-val{
    margin-top: 5px;
    display: flex;
    align-items: center;
    gap: 5px;
}
.tile-val.low{
    margin-top: 10px;
}
.tile-val b{
    font-family: "DejaVu Sans Mono", monospace;
    font-size: 16.5px;
    line-height: 22px;
}
.bias{
    margin-top: 4px;
    display: flex;
    align-items: center;
    gap: 7px;
    font-size: 15px;
    font-weight: 600;
    color: #2ecf72;
}
.bias i{
    margin-left: 3px;
    width: 10px;
    height: 10px;
    background: #2ecf72;
    border-radius: 50%;
}
.flow-foot{
    margin-top: 48px;
    display: flex;
    justify-content: space-between;
    padding-right: 18px;
    font-size: 12.5px;
    line-height: 16px;
    color: #8a9aa8;
}

/* bottom ticker */
.ticker-bar{
    height: 63px;
    flex: none;
    display: flex;
    align-items: center;
    padding: 0 13px;
    background: #0b1f35;
    border-top: 3px solid #e53e3e;
}
.closed{
    width: 82px;
    height: 27px;
    line-height: 25px;
    text-align: center;
    background: #472333;
    border: 1px solid #8a2a3a;
    border-radius: 4px;
    font-size: 15px;
    font-weight: 700;
    color: #f45a5a;
}
.info-foot{
    margin-left: 14px;
    color: #8a98a6;
    stroke-width: 1.6;
}
.foot-sep{
    margin-left: 15px;
    width: 1px;
    height: 26px;
    background: #17314c;
}
.tick-item{
    margin-left: 20px;
    display: flex;
    align-items: center;
    font-size: 15px;
}
.tick-item + .tick-item{
    margin-left: 31px;
}
.tick-item span{
    letter-spacing: 0.5px;
    color: #8a98a6;
}
.tick-item b{
    margin-left: 9px;
    font-family: "DejaVu Sans Mono", monospace;
    font-weight: 700;
    font-size: 15px;
    color: #f2f5f8;
}
.tick-item em{
    margin-left: 7px;
    height: 25px;
    padding: 0 8px;
    display: flex;
    align-items: center;
    background: #472333;
    border-radius: 5px;
    letter-spacing: 0.7px;
    color: #f05a5a;
}
.tick-item em svg{
    margin-right: 4px;
}
.tick-item small{
    margin-left: 6px;
    font-size: 15px;
    color: #c9505a;
}
.foot-sep.right{
    margin-left: auto;
}
.clock{
    margin-left: 11px;
    width: 167px;
    height: 31px;
    display: flex;
    align-items: center;
    gap: 3px;
    padding-left: 12px;
    background: #0a1a2e;
    border-radius: 14px;
    font-family: "DejaVu Sans Mono", monospace;
    font-size: 14px;
    color: #9aa7b4;
    white-space: pre;
}
.clock svg{
    color: #4a8fe0;
}
.clock span{
    color: #6f7f8f;
}
.sync{
    margin-left: 8px;
    width: 35px;
    height: 35px;
    display: flex;
    align-items: center;
    justify-content: center;
    background: #12304f;
    border-radius: 12px;
    color: #4a8fe8;
}

/* floating buttons */
.fab{
    position: absolute;
    left: 1829px;
    top: 1000px;
    width: 50px;
    height: 50px;
    display: flex;
    align-items: center;
    justify-content: center;
    background: #3a7be0;
    border-radius: 50%;
    box-shadow: 0 8px 20px rgba(58, 123, 224, 0.25);
    color: #fff;
}
.fab-help{
    position: absolute;
    left: 1834px;
    top: 1071px;
    width: 45px;
    height: 45px;
    display: flex;
    align-items: center;
    justify-content: center;
    border: 1px solid #8a98a6;
    border-radius: 50%;
    color: #aab5c1;
}
```

FILE: chart.js
```js
// chart coordinates are page pixels, viewBox matches the plot position
var svg = document.getElementById("chart");
var NS = "http://www.w3.org/2000/svg";
var GREEN = "#2cbf6a";
var RED = "#e53935";

function add(parent, name, attrs, text){
    var node = document.createElementNS(NS, name);
    for(var key in attrs){
        node.setAttribute(key, attrs[key]);
    }
    if(text){
        node.textContent = text;
    }
    parent.appendChild(node);
    return node;
}

function pts(list){
    return list.map(function(p){ return p[0] + "," + p[1]; }).join(" ");
}

var upperY = [581,568,557,548,544,528,518,508,498,488,479,476,472,486,482,480,484,490,490,509,509,499,497,490,488,482,474,473,462,455,447,439,434,432,431,431,430,428,433,433,430,429,427,427,428,429,434,433,442,450,462,471,473,483,488,500,510,509,512];
var upper = upperY.map(function(y, i){ return [Math.round(493 + i * 9.67), y]; });
var middle = [[493,653],[512,642],[531,635],[551,622],[570,612],[589,600],[608,587],[618,575],[637,567],[657,558],[676,551],[695,547],[715,538],[734,531],[753,527],[773,520],[792,513],[811,506],[831,502],[850,499],[869,498],[879,499],[898,508],[918,513],[937,517],[957,526],[976,533],[995,542],[1015,548],[1034,553],[1053,556]];
var lower = [[493,723],[502,725],[512,731],[531,727],[541,728],[560,728],[570,727],[580,722],[589,717],[599,707],[608,700],[618,666],[628,658],[637,648],[647,637],[657,623],[666,622],[676,591],[686,591],[695,592],[705,591],[715,590],[724,579],[734,581],[744,583],[753,582],[763,584],[773,586],[792,587],[802,585],[811,582],[821,581],[831,572],[840,569],[850,571],[860,564],[869,563],[879,567],[889,575],[898,583],[908,588],[918,593],[928,597],[937,603],[947,611],[957,610],[966,612],[976,609],[986,607],[995,605],[1005,605],[1015,606],[1024,602],[1034,597],[1043,596],[1053,597]];

// wick top, wick bottom, body top, body bottom, kind (h hollow, g solid green, r solid red)
var candles = [
    [557,597,558,586,"h"],[581,581,580,582,"r"],[557,567,560,564,"r"],[554,613,569,586,"h"],[597,603,598,600,"r"],
    [529,577,529,569,"h"],[547,548,547,549,"r"],[537,539,537,539,"g"],[520,537,529,531,"r"],[508,551,526,538,"r"],
    [515,537,515,532,"r"],[528,550,536,539,"g"],[539,540,539,541,"r"],[537,551,537,539,"r"],[500,537,518,521,"g"],
    [508,570,516,567,"r"],[507,530,517,529,"r"],[557,573,560,567,"h"],[571,572,571,573,"r"],[557,573,559,561,"r"],
    [540,568,556,568,"h"],[464,560,488,559,"h"],[510,517,511,513,"r"],[483,507,488,492,"r"],[497,500,497,500,"g"],
    [483,503,491,493,"r"],[453,510,476,493,"h"],[500,515,501,512,"r"],[457,480,461,477,"h"],[473,475,473,475,"r"],
    [459,462,459,462,"g"],[455,508,461,481,"h"],[453,477,467,469,"r"],[462,477,462,477,"r"],[469,499,470,498,"r"],
    [484,486,484,486,"g"],[483,500,492,500,"h"],[500,587,501,575,"r"],[516,536,516,533,"r"],[557,584,559,577,"h"],
    [573,574,573,575,"r"],[560,562,560,562,"g"],[550,577,563,567,"r"],[555,568,556,567,"h"],[545,570,550,566,"h"],
    [562,564,562,564,"g"],[535,590,545,577,"h"],[576,589,576,583,"r"],[533,557,537,547,"h"],[553,555,553,555,"g"],
    [537,539,537,539,"g"],[470,567,517,558,"r"],[473,497,475,493,"h"],[552,582,560,565,"r"],[570,572,570,572,"g"],
    [528,570,567,570,"r"],[523,572,547,566,"h"],[554,577,558,569,"h"],[563,564,562,564,"r"],[552,577,558,564,"h"]
];

// future candles: x, wick top, wick bottom, body top, body bottom, hollow, opacity
var future = [
    [1088.5,500,572,521,558,1,1],[1109,498,558,512,537,0,0.85],[1130,471,542,491,529,1,0.8],[1150,468,529,482,508,0,0.65],
    [1171,441,513,462,499,1,0.55],[1192,439,500,453,478,0,0.45],[1212,411,484,433,470,1,0.2]
];

// swing points: x, y, up, label, label y
var swings = [
    [521,617,1,"HL",597],[580,508,1,"HH",489],[599,552,1,"HL",533],[628,498,1,"HH",479],[637,574,0,"LL",591],
    [744,455,1,"HH",436],[744,517,1,"HL",498],[792,451,1,"HH",432],[937,589,0,"LL",606],[985.5,466,0,"LH",482],
    [1005,583,1,"HL",563],[1034,527,0,"LH",544]
];
var swingPath = [[521,617],[580,508],[599,552],[628,498],[637,574],[744,455],[744,517],[792,451],[937,589],[985.5,466],[1005,583],[1034,527]];

// volume profile: y, green end, red end
var profile = [[449,529,538],[458,531,542],[467,524,552],[475,570,621],[484,562,620],[493,562,620],[502,501,544],[511,505,531],[520,513,540],[529,531,568],[538,534,579],[547,545,615],[556,556,627],[565,545,623],[574,535,598],[583,534,551],[592,516,516],[600,504,504],[609,503,503]];

// volume bars: x, height, up
var volume = [[493,16,1],[512,29,0],[521,6,1],[540,17,1],[580,5,0],[599,8,1],[618,20,0],[637,8,0],[656,8,1],[676,32,0],[695,8,1],[715,15,0],[734,42,0],[744,11,1],[763,18,1],[802,5,0],[821,12,0],[840,75,1],[850,6,0],[870,14,1],[899,6,0],[918,18,1],[937,6,1],[956,11,1],[985,8,0],[1005,12,0],[1024,6,0],[1034,4,1],[1044,10,1],[1063,8,1]];

var prices = [["328.29",395],["324.76",428],["321.23",460],["317.70",493],["314.17",526],["307.11",591],["303.58",624],["300.05",656],["296.52",689],["292.99",722],["289.46",755]];
var dates = [["May 20",500],["May 22",608],["May 27",724],["May 29",840],["Jun 3",956],["Jun 5",1063]];

// grid
prices.forEach(function(p){
    add(svg, "line", {x1: 493, x2: 1233, y1: p[1], y2: p[1], stroke: "#fff", "stroke-opacity": 0.03});
});
dates.forEach(function(d){
    add(svg, "line", {x1: d[1], x2: d[1], y1: 369, y2: 761, stroke: "#fff", "stroke-opacity": 0.02});
});
add(svg, "line", {x1: 442, x2: 1233, y1: 806, y2: 806, stroke: "#23405e"});

// future zone
add(svg, "rect", {x: 1063, y: 369, width: 170, height: 392, fill: "#1a3b60", "fill-opacity": 0.75});
add(svg, "line", {x1: 1068, x2: 1068, y1: 394, y2: 761, stroke: "#2f5c90", "stroke-width": 1.3, "stroke-dasharray": "2 4"});

// watermark
add(svg, "text", {x: 860, y: 570, "text-anchor": "middle", "font-size": 100, "font-weight": 700, fill: "#fff", "fill-opacity": 0.055, style: "font-family:Inter"}, "HD");
add(svg, "text", {x: 861, y: 607, "text-anchor": "middle", "font-size": 25, fill: "#10263f", "fill-opacity": 0.55, style: "font-family:Inter"}, "The Home Depot Inc");
add(svg, "text", {x: 861, y: 635, "text-anchor": "middle", "font-size": 19, fill: "#10263f", "fill-opacity": 0.55, style: "font-family:Inter"}, "CONSUMER CYCLICAL");

// bollinger fill
add(svg, "linearGradient", {id: "bbLow", x1: 0, x2: 0, y1: 0, y2: 1});
var grad = svg.lastChild;
add(grad, "stop", {offset: 0, "stop-color": "#2a9bc4", "stop-opacity": 0.04});
add(grad, "stop", {offset: 1, "stop-color": "#2a9bc4", "stop-opacity": 0.28});
add(svg, "polygon", {points: pts(upper.concat(middle.slice().reverse())), fill: "#c8a040", "fill-opacity": 0.12});
add(svg, "polygon", {points: pts(middle.concat(lower.slice().reverse())), fill: "url(#bbLow)"});

// volume profile
profile.forEach(function(r){
    add(svg, "rect", {x: 488, y: r[0], width: r[1] - 488, height: 8, fill: GREEN, "fill-opacity": 0.3});
    if(r[2] > r[1]){
        add(svg, "rect", {x: r[1], y: r[0], width: r[2] - r[1], height: 8, fill: RED, "fill-opacity": 0.28});
    }
});
add(svg, "rect", {x: 488, y: 479, width: 133, height: 2.5, fill: "#c8a040", "fill-opacity": 0.85});
add(svg, "text", {x: 632, y: 484, "font-size": 10.5, fill: "#a0853f"}, "POC 319.22");

// bollinger lines
add(svg, "polyline", {points: pts(upper), fill: "none", stroke: "#b8963f", "stroke-width": 1.5});
add(svg, "polyline", {points: pts(middle), fill: "none", stroke: "#b4bcc6", "stroke-width": 1.5, "stroke-dasharray": "7 5"});
add(svg, "polyline", {points: pts(lower), fill: "none", stroke: "#2a9bc4", "stroke-width": 1.5});

// price line
add(svg, "line", {x1: 488, x2: 1233, y1: 558, y2: 558, stroke: GREEN, "stroke-opacity": 0.7, "stroke-dasharray": "5 5"});

// swing connectors
swingPath.slice(1).forEach(function(p, i){
    var prev = swingPath[i];
    add(svg, "line", {x1: prev[0], y1: prev[1], x2: p[0], y2: p[1], stroke: p[1] < prev[1] ? GREEN : RED, "stroke-opacity": 0.55});
});

function drawCandle(x, c, color, hollow, width, opacity){
    var g = add(svg, "g", {opacity: opacity});
    if(hollow){
        add(g, "line", {x1: x, x2: x, y1: c[0], y2: c[2], stroke: color, "stroke-width": 1.4});
        add(g, "line", {x1: x, x2: x, y1: c[3], y2: c[1], stroke: color, "stroke-width": 1.4});
        add(g, "rect", {x: x - width / 2 + 0.6, y: c[2], width: width - 1.2, height: c[3] - c[2], fill: "none", stroke: color, "stroke-width": 1.3});
    }else{
        add(g, "line", {x1: x, x2: x, y1: c[0], y2: c[1], stroke: color, "stroke-width": 1.4});
        add(g, "rect", {x: x - width / 2, y: c[2], width: width, height: c[3] - c[2], fill: color});
    }
}

candles.forEach(function(c, i){
    var color = c[4] == "r" ? RED : GREEN;
    drawCandle(493 + i * 9.67, c, color, c[4] == "h", 7, 1);
});

future.forEach(function(f){
    add(svg, "rect", {x: f[0] - 7, y: f[1] - 2, width: 14, height: f[2] - f[1] + 4, fill: "#fff", "fill-opacity": 0.02});
    drawCandle(f[0], [f[1], f[2], f[3], f[4]], GREEN, f[5], 8, f[6]);
});
add(svg, "polygon", {points: "1212,400 1208,407 1216,407", fill: GREEN, "fill-opacity": 0.15});

// swing markers
swings.forEach(function(s){
    var color = s[2] ? GREEN : RED;
    add(svg, "circle", {cx: s[0], cy: s[1], r: 8.5, fill: color, "fill-opacity": 0.2});
    add(svg, "circle", {cx: s[0], cy: s[1], r: 6, fill: color});
    add(svg, "text", {x: s[0], y: s[4] + 4, "text-anchor": "middle", "font-size": 10.5, fill: color}, s[3]);
});

// target
add(svg, "line", {x1: 1068, x2: 1233, y1: 432.5, y2: 432.5, stroke: "#a0853f", "stroke-opacity": 0.8, "stroke-dasharray": "8 5"});
add(svg, "text", {x: 1073, y: 428, "font-size": 10.5, fill: "#8a7a4a"}, "Target");
add(svg, "line", {x1: 1040, y1: 510, x2: 1092, y2: 433, stroke: "#3566b8", "stroke-width": 1.4, "stroke-dasharray": "6 5"});
add(svg, "circle", {cx: 1092, cy: 433, r: 8, fill: "#3a80e0", "fill-opacity": 0.15, stroke: "#3566b8"});
add(svg, "circle", {cx: 1092, cy: 433, r: 3.5, fill: "#3a70d0"});

// statistical reading label
add(svg, "text", {x: 1072, y: 385, "font-size": 10.3, fill: "#9aa7b4"}, "Statistical Reading");
add(svg, "circle", {cx: 1200, cy: 381, r: 9, fill: "none", stroke: "#8a98a6"});
add(svg, "line", {x1: 1200, x2: 1200, y1: 379, y2: 385.5, stroke: "#8a98a6"});
add(svg, "line", {x1: 1200, x2: 1200, y1: 376.5, y2: 377.2, stroke: "#8a98a6"});

// axes
prices.forEach(function(p){
    add(svg, "text", {x: 1241, y: p[1] + 4.5, "font-size": 12.2, fill: "#3c6a9a"}, p[0]);
});
add(svg, "text", {x: 1241, y: 437, "font-size": 12.2, fill: "#a0853f"}, "324.33");
add(svg, "circle", {cx: 1233, cy: 558, r: 5, fill: GREEN, "fill-opacity": 0.6});
add(svg, "rect", {x: 1233, y: 548, width: 79, height: 20, rx: 2, fill: GREEN});
add(svg, "text", {x: 1238, y: 562.5, "font-size": 12.2, "font-weight": 700, fill: "#fff"}, "310.78");
dates.forEach(function(d){
    add(svg, "text", {x: d[1], y: 789, "text-anchor": "middle", "font-size": 11, fill: "#3c6a9a"}, d[0]);
});
add(svg, "text", {x: 1219, y: 801, "font-size": 10.5, fill: "#2d4d6c"}, "ET");

// volume
volume.forEach(function(v){
    add(svg, "rect", {x: v[0] - 3.5, y: 884 - v[1], width: 7, height: v[1], fill: v[2] ? "#1f5a5a" : "#5a3448"});
});

// obv sparkline, viewBox is 3x page pixels
var obv = document.getElementById("obv");
var obvLine = [[85,360],[97,320],[105,322],[110,345],[122,348],[140,285],[155,292],[172,322],[178,305],[195,290],[212,220],[235,195],[250,195],[300,195],[345,200],[380,205],[385,217],[410,205],[420,228],[440,235],[465,232],[472,216],[500,217],[510,226],[540,232],[548,241],[578,237],[582,221],[612,225],[622,214],[650,212],[660,225],[690,228],[705,315],[720,303],[740,310],[760,322],[785,333],[795,322],[815,320],[830,338],[860,346],[870,360],[890,363],[900,352],[935,338],[940,325],[970,315],[980,308],[1030,308],[1045,300],[1075,305],[1082,295],[1110,288],[1125,270],[1150,263],[1180,268],[1190,295],[1230,303],[1240,297],[1270,292],[1300,298],[1315,295],[1330,295]];
add(obv, "polygon", {points: pts([[85,362]].concat(obvLine, [[1330,362]])), fill: "#3a80e0", "fill-opacity": 0.15});
add(obv, "line", {x1: 85, x2: 1330, y1: 362, y2: 362, stroke: "#3f6fa5", "stroke-width": 2.5, "stroke-dasharray": "8 8"});
add(obv, "polyline", {points: pts(obvLine), fill: "none", stroke: "#3a80e0", "stroke-width": 4.5});
add(obv, "circle", {cx: 1330, cy: 295, r: 8, fill: "#1fc890"});
add(obv, "text", {x: 87, y: 209, "font-size": 33, fill: "#1fc08a", style: "font-family:Inter"}, "Peak: 10.4M · 2mo ago");
```
